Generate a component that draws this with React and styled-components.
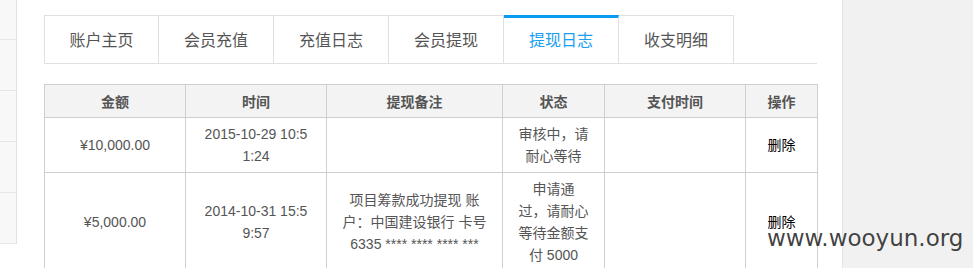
import React from "react";
import styled, { createGlobalStyle } from "styled-components";

const GlobalStyle = createGlobalStyle`
  html, body {
    margin: 0;
    padding: 0;
    background: #fff;
  }
  body {
    font-family: "Liberation Sans", "Noto Sans CJK SC", sans-serif;
    color: #555;
  }
`;

const Page = styled.div`
  position: relative;
  display: flex;
  height: 100vh;
  overflow: hidden;
`;

const Sidebar = styled.div`
  width: 16px;
  margin-top: -11px;
  align-self: flex-start;
  border-right: 1px solid #e2e2e2;
  background: #f8f8f8;
`;

const SideItem = styled.div`
  height: 50px;
  border-bottom: 1px solid #e6e6e6;
`;

const Main = styled.div`
  width: 773px;
  margin: 15px 25px 0 27px;
`;

const TabBar = styled.div`
  display: flex;
  border-bottom: 1px solid #e0e0e0;
`;

const Tab = styled.div`
  width: 115px;
  height: 48px;
  box-sizing: border-box;
  border-top: ${(p) => (p.$active ? "3px solid #0a9af2" : "1px solid #e0e0e0")};
  border-right: 1px solid #e0e0e0;
  border-left: ${(p) => (p.$first ? "1px solid #e0e0e0" : "none")};
  padding-top: ${(p) => (p.$active ? "8px" : "10px")};
  text-align: center;
  font-family: "Noto Sans CJK SC", sans-serif;
  font-size: 16px;
  line-height: 26px;
  color: ${(p) => (p.$active ? "#1a9ff2" : "#555")};
`;

const Table = styled.table`
  margin-top: 20px;
  width: 773px;
  border-collapse: collapse;
  table-layout: fixed;
  font-size: 14px;
`;

const Th = styled.th`
  border: 1px solid #cfcfcf;
  background: #f3f3f3;
  padding: 5px 15px;
  line-height: 22px;
  font-family: "Noto Sans CJK SC", sans-serif;
  font-weight: bold;
  color: #555;
`;

const Td = styled.td`
  border: 1px solid #cfcfcf;
  padding: 5px 15px;
  line-height: 22px;
  text-align: center;
  vertical-align: middle;
  word-break: break-all;
  color: ${(p) => (p.$action ? "#000" : "#555")};
`;

const RightPanel = styled.div`
  flex: 1;
  border-left: 1px solid #e4e4e4;
  background: #f1f1f1;
`;

const Watermark = styled.div`
  position: absolute;
  left: 767px;
  top: 227px;
  font-family: "DejaVu Sans", sans-serif;
  font-size: 23px;
  line-height: 23px;
  color: rgba(40, 40, 40, 0.88);
  white-space: nowrap;
`;

const tabs = ["账户主页", "会员充值", "充值日志", "会员提现", "提现日志", "收支明细"];

const columns = [
  { title: "金额", width: 141 },
  { title: "时间", width: 141 },
  { title: "提现备注", width: 176 },
  { title: "状态", width: 102 },
  { title: "支付时间", width: 141 },
  { title: "操作", width: 72 },
];

const rows = [
  {
    amount: "¥10,000.00",
    time: "2015-10-29 10:51:24",
    note: "",
    status: ["审核中，请耐心等待"],
    paid: "",
  },
  {
    amount: "¥5,000.00",
    time: "2014-10-31 15:59:57",
    note: "项目筹款成功提现 账户：中国建设银行 卡号 6335 **** **** **** ***",
    status: ["申请通", "过，请耐心等待金额支付 5000"],
    paid: "",
  },
];

export default function App() {
  return (
    <>
      <GlobalStyle />
      <Page>
        <Sidebar>
          {[0, 1, 2, 3, 4].map((i) => (
            <SideItem key={i} />
          ))}
        </Sidebar>

        <Main>
          <TabBar>
            {tabs.map((t, i) => (
              <Tab key={t} $first={i === 0} $active={t === "提现日志"}>
                {t}
              </Tab>
            ))}
          </TabBar>

          <Table>
            <colgroup>
              {columns.map((c) => (
                <col key={c.title} style={{ width: c.width }} />
              ))}
            </colgroup>
            <thead>
              <tr>
                {columns.map((c) => (
                  <Th key={c.title}>{c.title}</Th>
                ))}
              </tr>
            </thead>
            <tbody>
              {rows.map((r) => (
                <tr key={r.time}>
                  <Td>{r.amount}</Td>
                  <Td>{r.time}</Td>
                  <Td>{r.note}</Td>
                  <Td>
                    {r.status.map((s, i) => (
                      <React.Fragment key={i}>
                        {i > 0 && <br />}
                        {s}
                      </React.Fragment>
                    ))}
                  </Td>
                  <Td>{r.paid}</Td>
                  <Td $action>删除</Td>
                </tr>
              ))}
            </tbody>
          </Table>
        </Main>

        <RightPanel />
        <Watermark>www.wooyun.org</Watermark>
      </Page>
    </>
  );
}
